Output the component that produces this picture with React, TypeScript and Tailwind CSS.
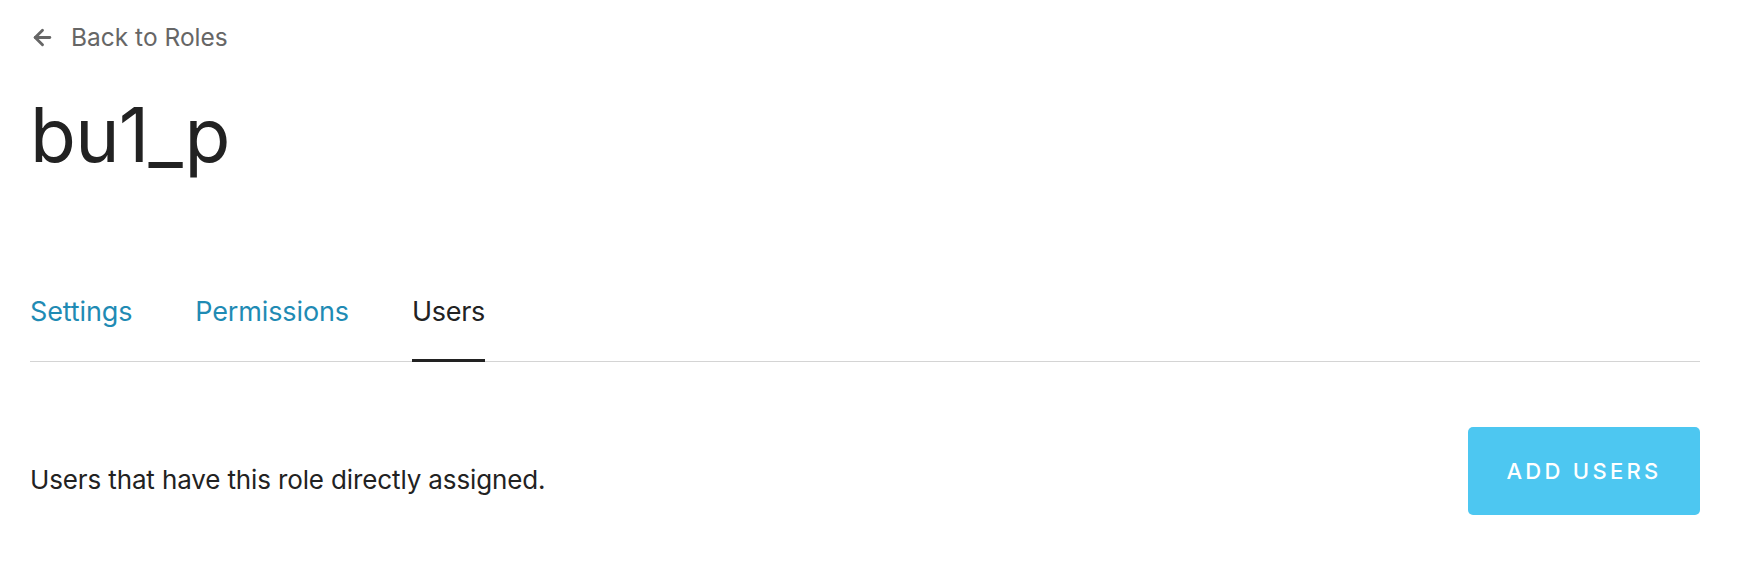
import { ArrowLeft } from 'lucide-react';

const tabs = [
  { label: 'Settings', active: false },
  { label: 'Permissions', active: false },
  { label: 'Users', active: true },
];

export default function App() {
  return (
    <div className="min-h-[574px] bg-white pl-[30px] pr-[40px] font-['Inter',sans-serif]">
      <a href="#" className="flex items-center gap-[16px] pt-[19px] text-[24.5px] text-[#666666]">
        <ArrowLeft className="h-[25px] w-[25px]" strokeWidth={2.75} />
        <span>Back to Roles</span>
      </a>

      <h1 className="mt-[41px] text-[75px] leading-none tracking-[-0.01em] text-[#222222]">bu1_p</h1>

      <nav className="mt-[120px] flex gap-[63px] border-b border-[#d4d4d4]">
        {tabs.map((tab) => (
          <a
            key={tab.label}
            href="#"
            className={
              tab.active
                ? '-mb-px border-b-[3px] border-[#222222] pb-[26px] text-[27px] tracking-[-0.01em] text-[#222222]'
                : 'pb-[29px] text-[27px] tracking-[-0.005em] text-[#1f8bb4]'
            }
          >
            {tab.label}
          </a>
        ))}
      </nav>

      <div className="mt-[65px] flex items-center justify-between">
        <p className="pt-[16px] text-[26px] tracking-[-0.005em] text-[#222222]">Users that have this role directly assigned.</p>
        <button className="h-[88px] w-[232px] rounded-[5px] bg-[#4dc7f1] text-[22px] font-medium tracking-[0.15em] text-white">
          ADD USERS
        </button>
      </div>
    </div>
  );
}
